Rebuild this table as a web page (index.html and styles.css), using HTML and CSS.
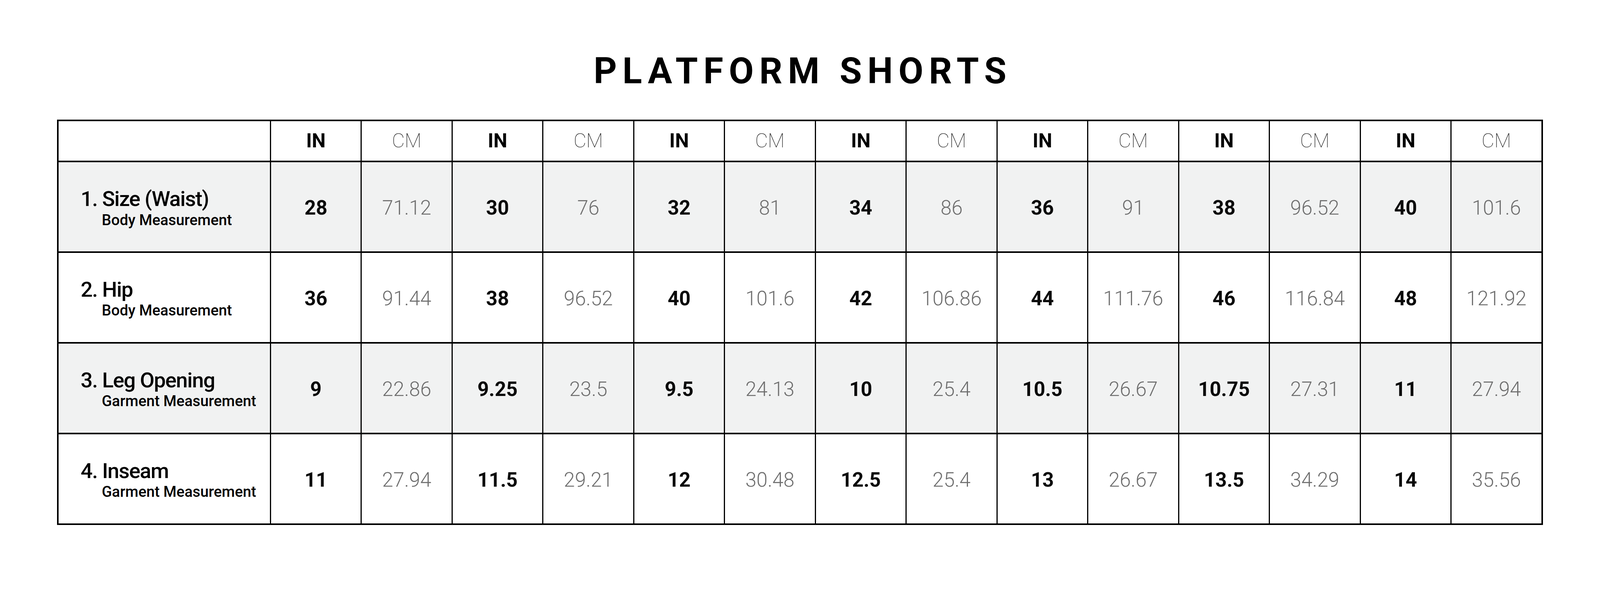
FILE: index.html
```html
<!DOCTYPE html>
<html lang="en">
<head>
<meta charset="utf-8">
<title>Platform Shorts – Size Chart</title>
<link rel="stylesheet" href="styles.css">
</head>
<body>
<main class="page">
  <h1 class="title">PLATFORM SHORTS</h1>
  <div class="chart">
    <div class="cell corner"></div>
    <div class="cell head in">IN</div><div class="cell head cm">CM</div>
    <div class="cell head in">IN</div><div class="cell head cm">CM</div>
    <div class="cell head in">IN</div><div class="cell head cm">CM</div>
    <div class="cell head in">IN</div><div class="cell head cm">CM</div>
    <div class="cell head in">IN</div><div class="cell head cm">CM</div>
    <div class="cell head in">IN</div><div class="cell head cm">CM</div>
    <div class="cell head in">IN</div><div class="cell head cm">CM</div>

    <div class="cell label shade"><span class="name">1. Size (Waist)</span><span class="sub">Body Measurement</span></div>
    <div class="cell val in shade">28</div><div class="cell val cm shade">71.12</div>
    <div class="cell val in shade">30</div><div class="cell val cm shade">76</div>
    <div class="cell val in shade">32</div><div class="cell val cm shade">81</div>
    <div class="cell val in shade">34</div><div class="cell val cm shade">86</div>
    <div class="cell val in shade">36</div><div class="cell val cm shade">91</div>
    <div class="cell val in shade">38</div><div class="cell val cm shade">96.52</div>
    <div class="cell val in shade">40</div><div class="cell val cm shade">101.6</div>

    <div class="cell label"><span class="name">2. Hip</span><span class="sub">Body Measurement</span></div>
    <div class="cell val in">36</div><div class="cell val cm">91.44</div>
    <div class="cell val in">38</div><div class="cell val cm">96.52</div>
    <div class="cell val in">40</div><div class="cell val cm">101.6</div>
    <div class="cell val in">42</div><div class="cell val cm">106.86</div>
    <div class="cell val in">44</div><div class="cell val cm">111.76</div>
    <div class="cell val in">46</div><div class="cell val cm">116.84</div>
    <div class="cell val in">48</div><div class="cell val cm">121.92</div>

    <div class="cell label shade"><span class="name">3. Leg Opening</span><span class="sub">Garment Measurement</span></div>
    <div class="cell val in shade">9</div><div class="cell val cm shade">22.86</div>
    <div class="cell val in shade">9.25</div><div class="cell val cm shade">23.5</div>
    <div class="cell val in shade">9.5</div><div class="cell val cm shade">24.13</div>
    <div class="cell val in shade">10</div><div class="cell val cm shade">25.4</div>
    <div class="cell val in shade">10.5</div><div class="cell val cm shade">26.67</div>
    <div class="cell val in shade">10.75</div><div class="cell val cm shade">27.31</div>
    <div class="cell val in shade">11</div><div class="cell val cm shade">27.94</div>

    <div class="cell label"><span class="name">4. Inseam</span><span class="sub">Garment Measurement</span></div>
    <div class="cell val in">11</div><div class="cell val cm">27.94</div>
    <div class="cell val in">11.5</div><div class="cell val cm">29.21</div>
    <div class="cell val in">12</div><div class="cell val cm">30.48</div>
    <div class="cell val in">12.5</div><div class="cell val cm">25.4</div>
    <div class="cell val in">13</div><div class="cell val cm">26.67</div>
    <div class="cell val in">13.5</div><div class="cell val cm">34.29</div>
    <div class="cell val in">14</div><div class="cell val cm">35.56</div>
  </div>
</main>
</body>
</html>
```

FILE: styles.css
```css
:root {
  /* one design pixel of the 4167px-wide artboard */
  --u: calc(100vw / 4167);
}

html, body {
  margin: 0;
  padding: 0;
  background: #ffffff;
}

body {
  font-family: Roboto, "Liberation Sans", sans-serif;
  color: #000000;
}

.page {
  padding-top: calc(138 * var(--u));
  display: flex;
  flex-direction: column;
  align-items: center;
}

.title {
  margin: 0 0 calc(79 * var(--u)) 0;
  font-size: calc(94 * var(--u));
  line-height: calc(94 * var(--u));
  font-weight: 700;
  letter-spacing: calc(14.5 * var(--u));
  padding-left: calc(14.5 * var(--u));
  color: #000000;
}

.chart {
  box-sizing: border-box;
  width: calc(3869 * var(--u));
  display: grid;
  grid-template-columns: calc(550 * var(--u)) repeat(14, 1fr);
  grid-template-rows: calc(103 * var(--u)) repeat(4, calc(232 * var(--u)));
  gap: calc(4 * var(--u)) calc(3 * var(--u));
  padding: calc(4 * var(--u));
  background: #000000;
}

.cell {
  display: flex;
  align-items: center;
  justify-content: center;
  background: #ffffff;
  font-size: calc(51 * var(--u));
  line-height: 1;
}

.cell.shade {
  background: #f1f2f2;
}

.head.in {
  font-weight: 700;
  color: #000000;
}

.head.cm {
  font-weight: 100;
  color: #1a1a1a;
}

.val {
  font-size: calc(52 * var(--u));
  padding-top: calc(5 * var(--u));
}

.val.in {
  font-weight: 700;
  color: #0a0a0a;
}

.val.cm {
  font-weight: 300;
  color: #6e6e6e;
}

.label {
  flex-direction: column;
  align-items: flex-start;
  justify-content: center;
  padding-left: calc(57 * var(--u));
  padding-top: calc(6 * var(--u));
}

.label .name {
  font-size: calc(55 * var(--u));
  line-height: calc(55 * var(--u));
  letter-spacing: calc(-1.4 * var(--u));
  font-weight: 500;
  color: #000000;
}

.label .sub {
  margin-top: calc(8 * var(--u));
  margin-left: calc(55 * var(--u));
  font-size: calc(39 * var(--u));
  line-height: calc(39 * var(--u));
  font-weight: 500;
  color: #000000;
}
```
